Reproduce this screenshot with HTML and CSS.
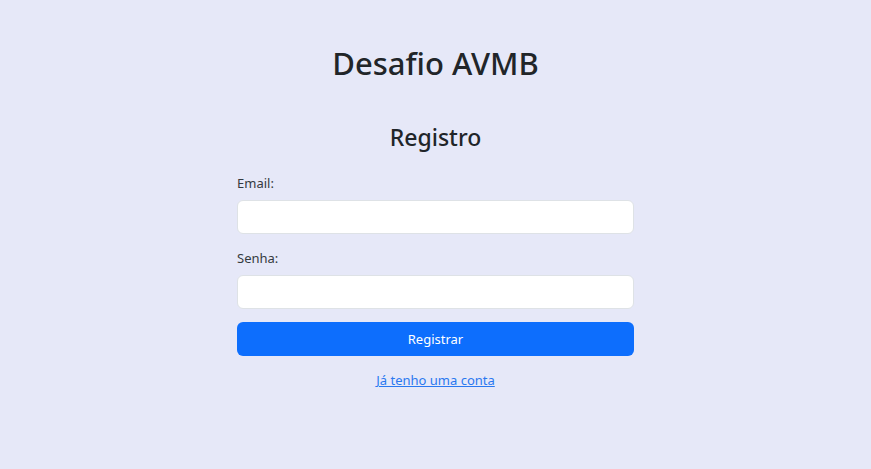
FILE: index.html
```html
<!DOCTYPE html>
<html lang="pt">
<head>
<meta charset="utf-8">
<title>Desafio AVMB</title>
<link rel="stylesheet" href="styles.css">
</head>
<body>
<main class="page">
  <h1 class="title">Desafio AVMB</h1>
  <section class="card">
    <h2 class="subtitle">Registro</h2>
    <form class="form">
      <div class="field">
        <label class="label" for="email">Email:</label>
        <input class="input" id="email" type="email">
      </div>
      <div class="field">
        <label class="label" for="senha">Senha:</label>
        <input class="input" id="senha" type="password">
      </div>
      <button class="btn" type="button">Registrar</button>
    </form>
    <a class="link" href="#">Já tenho uma conta</a>
  </section>
</main>
</body>
</html>
```
FILE: styles.css
```css
* { box-sizing: border-box; }
html, body { margin: 0; padding: 0; }
body {
  background: #e6e8f8;
  font-family: "Segoe UI", "Noto Sans", sans-serif;
  color: #212529;
  height: 469px;
}
.page {
  display: flex;
  flex-direction: column;
  align-items: center;
  padding-top: 40px;
}
.title {
  margin: 0;
  font-size: 31px;
  font-weight: 500;
  line-height: 46px;
}
.card {
  width: 397px;
  margin-top: 35px;
  display: flex;
  flex-direction: column;
  align-items: center;
}
.subtitle {
  margin: 0;
  font-size: 23px;
  font-weight: 500;
  line-height: 32px;
}
.form {
  width: 100%;
  margin-top: 20px;
  display: flex;
  flex-direction: column;
}
.field { display: flex; flex-direction: column; margin-bottom: 14px; }
.field + .field { margin-bottom: 13px; }
.label {
  font-size: 13px;
  line-height: 20px;
  color: #343a40;
  margin-bottom: 7px;
}
.input {
  height: 34px;
  border: 1px solid #dee2e6;
  border-radius: 6px;
  background: #fff;
}
.btn {
  height: 34px;
  border: none;
  border-radius: 6px;
  background: #0d6efd;
  color: #fff;
  font-family: inherit;
  font-size: 13px;
}
.link {
  margin-top: 14px;
  font-size: 13px;
  line-height: 20px;
  color: #2a78f0;
  text-decoration: underline;
}
```
